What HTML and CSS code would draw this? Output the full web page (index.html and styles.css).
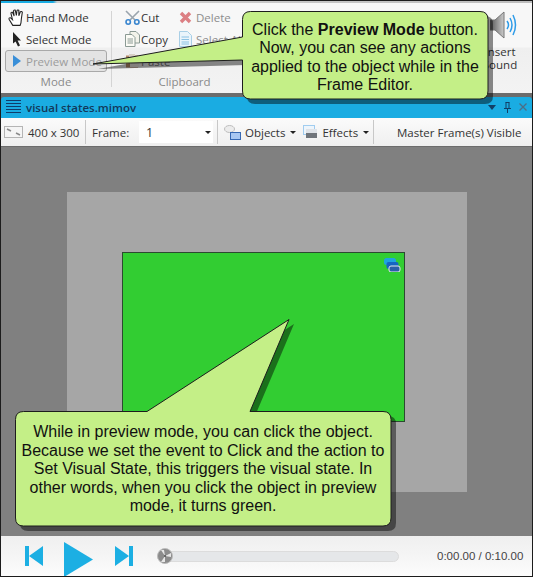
FILE: index.html
```html
<!DOCTYPE html>
<html lang="en">
<head>
<meta charset="utf-8">
<title>Preview Mode</title>
<link rel="stylesheet" href="styles.css">
</head>
<body>
<div class="app">
  <header class="ribbon">
    <div class="tab-line"></div>
    <div class="ribbon-body">
      <section class="group group-mode">
        <div class="group-items mode-items">
          <div class="cmd">
            <svg class="ico-hand" width="17" height="17" viewBox="0 0 16 16"><path d="M4.5 15.4 1 9.6Q.6 8 2.2 8.2L4.2 10 2.8 4.2Q2.8 2.8 4.2 3L5.8 6.6 5.2 2Q5.4.6 6.8 1L7.9 6 8.4 1.6Q9 .5 10.2 1.2L10.2 6.3 11.6 2.6Q12.8 1.8 13.5 3L12.6 9 12.2 13 11.4 15.4Z" fill="#fff" stroke="#222" stroke-width="1"/></svg>
            <span>Hand Mode</span>
          </div>
          <div class="cmd">
            <svg class="ico-arrow" width="10" height="15" viewBox="0 0 10 15"><path d="M1 0 9 8.4 5.6 8.4 8 13.6 6 14.6 3.6 9.4 1 11.6Z" fill="#222"/></svg>
            <span>Select Mode</span>
          </div>
          <div class="cmd cmd-active">
            <svg width="8" height="12" viewBox="0 0 8 12"><path d="M0 0 8 6 0 12Z" fill="#3a8fd8"/></svg>
            <span>Preview Mode</span>
          </div>
        </div>
        <div class="group-label">Mode</div>
      </section>
      <div class="ribbon-sep"></div>
      <section class="group group-clip">
        <div class="group-items clip-items">
          <div class="cmd">
            <svg width="15" height="15" viewBox="0 0 15 15"><path d="M1 1 10 10M14 1 5 10" stroke="#9aa4ad" stroke-width="1.6"/><circle cx="3.2" cy="12" r="2.2" fill="none" stroke="#3a86cf" stroke-width="1.6"/><circle cx="11.8" cy="12" r="2.2" fill="none" stroke="#3a86cf" stroke-width="1.6"/></svg>
            <span>Cut</span>
          </div>
          <div class="cmd cmd-off">
            <svg width="13" height="13" viewBox="0 0 13 13"><path d="M2 2 11 11M11 2 2 11" stroke="#dc7f83" stroke-width="3.4"/></svg>
            <span>Delete</span>
          </div>
          <div class="cmd">
            <svg width="15" height="16" viewBox="0 0 15 16"><path d="M5 .5H11L14.500 4V12H5Z" fill="#f3f3ea" stroke="#8b9a94"/><path d="M.5 3.500H7L10 6.500V15.500H.5Z" fill="#fbfbf5" stroke="#8b9a94"/><path d="M2.500 8H8M2.500 10H8M2.500 12H8" stroke="#8b9a94"/></svg>
            <span>Copy</span>
          </div>
          <div class="cmd cmd-off">
            <svg width="13" height="16" viewBox="0 0 13 16"><path d="M.5.5H8.500L12.500 4.500V15.500H.5Z" fill="#eaf4fb" stroke="#a9cfe6"/><path d="M2.500 6H10M2.500 8.500H10M2.500 11H10M2.500 13H10" stroke="#8cc2e4"/></svg>
            <span>Select All</span>
          </div>
          <div class="cmd cmd-paste">
            <svg width="15" height="14" viewBox="0 0 15 14"><rect x="1" y="1.500" width="12" height="12" fill="#b58a68"/><rect x="4" y="0" width="6" height="3" fill="#d8cfc6"/><rect x="5" y="5" width="9" height="8" fill="#efeae4"/></svg>
            <span>Paste</span>
          </div>
        </div>
        <div class="group-label">Clipboard</div>
      </section>
      <section class="group-sound">
        <svg class="ico-sound" width="27" height="28" viewBox="0 0 27 28"><defs><linearGradient id="cone" x1="0" x2="1" y1="0" y2="0"><stop offset="0" stop-color="#555"/><stop offset="1" stop-color="#ccc"/></linearGradient></defs><path d="M0 9H5L14 1V27L5 19H0Z" fill="url(#cone)" stroke="#777"/><path d="M17 10Q20 14 17 18M20 7Q24 14 20 21M23 4Q28 14 23 24" fill="none" stroke="#2d9be8" stroke-width="1.500"/></svg>
        <span>Insert<br>Sound</span>
      </section>
    </div>
  </header>

  <div class="titlebar">
    <svg width="15" height="14" viewBox="0 0 15 14"><path d="M0 .5H15M0 3.500H15M0 6.500H15M0 9.500H15M0 12.500H15" stroke="#0f3d6b"/></svg>
    <span class="doc-name">visual states.mimov</span>
    <div class="window-btns">
      <svg width="8" height="5" viewBox="0 0 8 5"><path d="M0 0H8L4 5Z" fill="#123f66"/></svg>
      <svg width="7" height="11" viewBox="0 0 7 11"><path d="M1.500.5H5.500M2 .5V6M5 .5V6M0 6.500H7M3.500 6.500V11" stroke="#123f66" fill="none"/></svg>
      <svg width="8" height="8" viewBox="0 0 8 8"><path d="M.5.5 7.500 7.500M7.500.5.5 7.500" stroke="#4d6e85" stroke-width="1.300"/></svg>
    </div>
  </div>

  <div class="toolbar">
    <div class="tool tool-size">
      <svg width="19" height="12" viewBox="0 0 19 12"><rect x=".5" y=".5" width="18" height="11" fill="#f5f5f5" stroke="#b5b5b5"/><path d="M3 3 7 5M12 7 16 9" stroke="#8a8a8a" stroke-width="1.500"/></svg>
      <span>400 x 300</span>
    </div>
    <div class="tool tool-frame">
      <span class="frame-label">Frame:</span>
      <div class="combo"><span>1</span><i class="caret"></i></div>
    </div>
    <div class="tool tool-drop">
      <div class="drop drop-obj">
        <svg width="17" height="15" viewBox="0 0 17 15"><ellipse cx="5.500" cy="4" rx="5" ry="3.500" fill="#ececec" stroke="#bdbdbd"/><rect x="6.500" y="7.500" width="10" height="7" fill="#a9c8f2" stroke="#3769b3"/></svg>
        <span>Objects</span><i class="caret"></i>
      </div>
      <div class="drop drop-fx">
        <svg width="15" height="14" viewBox="0 0 15 14"><rect x=".5" y=".5" width="11" height="9" fill="#eef5fb" stroke="#4ea3e6" stroke-dasharray="1 1"/><rect x="3" y="4" width="11" height="9" fill="#70757b"/><rect x="3" y="4" width="11" height="4" fill="#dfe3e8"/></svg>
        <span>Effects</span><i class="caret"></i>
      </div>
    </div>
    <div class="tool tool-master"><span>Master Frame(s) Visible</span></div>
  </div>

  <main class="canvas">
    <div class="stage">
      <div class="object">
        <svg class="state-badge" width="17" height="14" viewBox="0 0 17 14"><rect x="0" y="0" width="12" height="7" rx="2.500" fill="#1fa4de"/><rect x="2.500" y="4" width="12" height="7" rx="2" fill="#1566c2"/><rect x="5" y="8" width="11" height="6" rx="2" fill="#2a5fa8" stroke="#e4e8ec"/></svg>
      </div>
    </div>
  </main>

  <footer class="player">
    <svg class="skip-back" width="18" height="20" viewBox="0 0 18 20"><path d="M0 0H4V20H0ZM18 0V20L4 10Z" fill="#1cafe3"/></svg>
    <svg class="play" width="29" height="35" viewBox="0 0 29 35"><path d="M0 0 29 17.500 0 35Z" fill="#1cafe3"/></svg>
    <svg class="skip-next" width="18" height="20" viewBox="0 0 18 20"><path d="M0 0 14 10 0 20ZM14 0H18V20H14Z" fill="#1cafe3"/></svg>
    <div class="track">
      <svg class="knob" width="16" height="16" viewBox="0 0 16 16"><circle cx="8" cy="8" r="7.500" fill="#8b8b8b" stroke="#bdbdbd"/><path d="M8 8 4 2H7ZM8 8 14 5V9ZM8 8 4 14H8Z" fill="#e6e6e6"/><circle cx="8" cy="8" r="1" fill="#555"/></svg>
    </div>
    <span class="time">0:00.00 / 0:10.00</span>
  </footer>
</div>

<svg class="callout-art" width="533" height="577" viewBox="0 0 533 577">
  <g class="callout-shadow">
    <path d="M250 16H485Q493 16 493 24V96Q493 104 485 104H255Q247 104 247 96V65L98 69 247 42V24Q247 16 255 16Z"/>
    <path d="M28 416H151L294 324 255 416H388Q396 416 396 424V523Q396 531 388 531H28Q20 531 20 523V424Q20 416 28 416Z"/>
  </g>
  <g class="callout-body">
    <path d="M250.500 11.500H480Q488 11.500 488 19.500V91Q488 99 480 99H250.500Q242.500 99 242.500 91V60L93 64 242.500 37V19.500Q242.500 11.500 250.500 11.500Z"/>
    <path d="M23.500 411.500H147L289 319.500 250 411.500H383Q391 411.500 391 419.500V518Q391 526 383 526H23.500Q15.500 526 15.500 518V419.500Q15.500 411.500 23.500 411.500Z"/>
  </g>
</svg>
<p class="callout-text callout-text-top">Click the <b>Preview Mode</b> button. Now, you can see any actions applied to the object while in the Frame Editor.</p>
<p class="callout-text callout-text-bottom">While in preview mode, you can click the object. Because we set the event to Click and the action to Set Visual State, this triggers the visual state. In other words, when you click the object in preview mode, it turns green.</p>
</body>
</html>
```
FILE: styles.css
```css
* { box-sizing: border-box; }
html, body { margin: 0; padding: 0; }
body {
  position: relative;
  width: 533px;
  height: 577px;
  overflow: hidden;
  font-family: "Open Sans", "Noto Sans", sans-serif;
  font-size: 11.5px;
  color: #333;
}
.app {
  width: 533px;
  height: 577px;
  border: 1px solid #1c1c1c;
  display: flex;
  flex-direction: column;
  background: #6c6c6c;
}
svg { display: block; flex: none; }

/* ribbon */
.ribbon { height: 92px; background: linear-gradient(#f7f7f7 0, #f7f7f7 46px, #efefef 47px, #f3f3f3 100%); flex: none; position: relative; }
.tab-line { height: 2px; background: linear-gradient(to right, #1aace2 0, #1aace2 52px, #d0d0d0 56px, #bdbdbd 100%); }
.ribbon-body { display: flex; height: 90px; }
.group { display: flex; flex-direction: column; align-items: stretch; }
.group-items { flex: 1; }
.group-label { text-align: center; color: #8a8a8a; height: 16px; line-height: 16px; }
.group-mode { width: 110px; padding: 3px 4px 0 4px; margin-bottom: 3px; }
.ribbon-sep { width: 1px; background: #d4d4d4; margin: 8px 0 6px; flex: none; }
.mode-items { display: flex; flex-direction: column; }
.cmd { display: flex; align-items: center; height: 22px; white-space: nowrap; }
.mode-items .cmd { gap: 1px; padding-left: 3px; }
.mode-items .ico-arrow { margin: 0 3px 0 4px; }
.mode-items .cmd-active {
  height: 22px;
  width: 102px;
  background: #e3e3e3;
  border: 1px solid #a9a9a9;
  border-radius: 3px;
  color: #9c9c9c;
  gap: 5px;
  padding-left: 7px;
}
.group-clip { width: 132px; padding: 3px 0 0 13px; margin-bottom: 3px; }
.clip-items { display: grid; grid-template-columns: 54px 1fr; grid-auto-rows: 22px; }
.clip-items .cmd { gap: 1px; }
.clip-items .cmd-off { gap: 4px; color: #8d8d8d; }
.cmd-paste { color: #777; }
.group-sound {
  margin-left: auto;
  margin-right: 7px;
  width: 50px;
  padding-top: 8px;
  display: flex;
  flex-direction: column;
  align-items: center;
  text-align: center;
  line-height: 13px;
}
.ico-sound { margin: 0 0 6px 6px; }

/* document title bar */
.titlebar {
  flex: none;
  margin-top: 4px;
  height: 21px;
  background: #1aace2;
  border-radius: 3px 3px 0 0;
  display: flex;
  align-items: center;
  padding: 0 5px 1px 5px;
  color: #12395a;
}
.doc-name { font-weight: 600; font-size: 11.5px; margin-left: 5px; }
.window-btns { margin-left: auto; display: flex; align-items: center; gap: 8px; }

/* toolbar */
.toolbar {
  flex: none;
  height: 29px;
  background: linear-gradient(#fbfbfb, #efefef);
  display: flex;
  align-items: center;
  border-bottom: 1px solid #6c6c6c;
}
.tool { height: 24px; display: flex; align-items: center; white-space: nowrap; }
.tool-size { width: 85px; padding-left: 3px; gap: 5px; border-right: 1px solid #c8c8c8; }
.tool-frame { width: 132px; padding-left: 6px; border-right: 1px solid #c8c8c8; }
.frame-label { width: 47px; flex: none; }
.combo {
  width: 74px;
  height: 22px;
  background: #fff;
  display: flex;
  align-items: center;
  justify-content: space-between;
  padding: 0 2px 0 7px;
  font-size: 12.5px;
}
.tool-drop { width: 156px; padding-left: 6px; border-right: 1px solid #c8c8c8; gap: 7px; }
.drop { display: flex; align-items: center; gap: 4px; }
.tool-master { padding-left: 23px; }
.caret { width: 0; height: 0; border: 3px solid transparent; border-top: 3px solid #222; border-bottom: 0; margin-left: 1px; }

/* canvas */
.canvas {
  flex: 1;
  background: #808080;
  display: flex;
  justify-content: center;
  align-items: flex-start;
  padding: 45px 0 0 1px;
}
.stage { width: 400px; height: 300px; background: #a6a6a6; position: relative; }
.object {
  position: absolute;
  left: 55px;
  top: 60px;
  width: 283px;
  height: 170px;
  background: #32cd32;
  border: 1px solid #2c4a30;
}
.state-badge { position: absolute; top: 5px; right: 3px; }

/* player */
.player {
  flex: none;
  height: 40px;
  background: linear-gradient(#efefef, #f5f5f5 50%, #fcfcfc);
  display: flex;
  align-items: center;
  padding-left: 24px;
  overflow: hidden;
}
.skip-back { margin-right: 21px; }
.play { margin: 6px 22px 0 0; }
.skip-next { margin-right: 24px; }
.track {
  width: 242px;
  height: 11px;
  background: #e5e7e9;
  border: 1px solid #dcdcdc;
  border-radius: 6px;
  position: relative;
}
.knob { position: absolute; left: -1px; top: -3.500px; }
.time { margin-left: 38px; font-family: "Liberation Sans", Arial, sans-serif; font-size: 11.5px; color: #444; white-space: nowrap; }

/* callouts */
.callout-art { position: absolute; left: 0; top: 0; }
.callout-shadow { fill: #000; fill-opacity: .45; }
.callout-body { fill: #c4ef87; stroke: #1d1d1d; stroke-width: 1; }
.callout-text {
  position: absolute;
  margin: 0;
  font-family: "Liberation Sans", Arial, sans-serif;
  font-size: 16px;
  line-height: 18.500px;
  color: #111;
  text-align: center;
}
.callout-text-top { left: 245px; top: 20.500px; width: 240px; }
.callout-text-bottom { left: 20px; top: 423px; width: 366px; }
```
